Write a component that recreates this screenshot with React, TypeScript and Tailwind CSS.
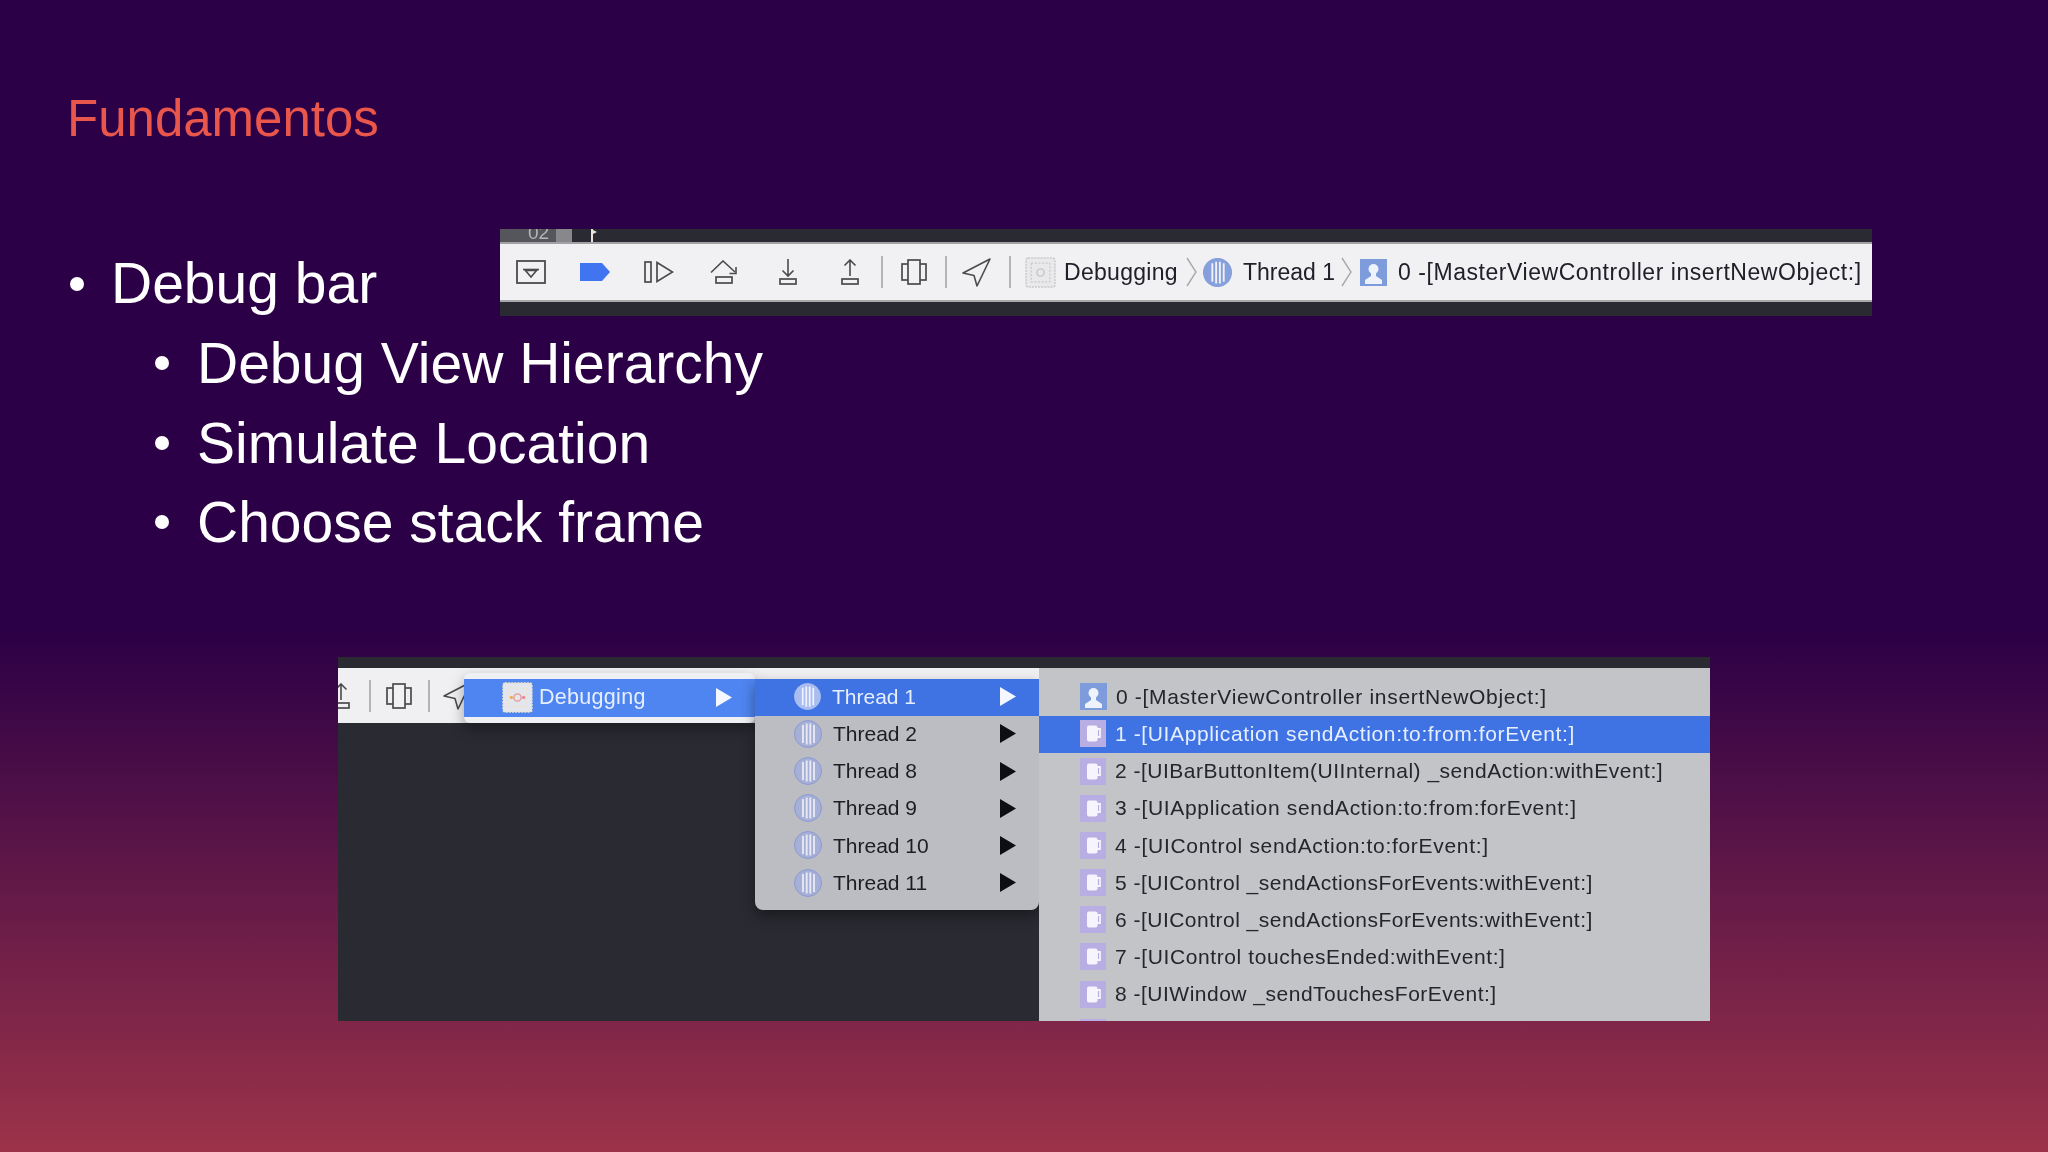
import React from "react";

const S = "#4b4b4e";

function BoxIcon() {
  return (
    <svg width="30" height="24" viewBox="0 0 30 24" className="shrink-0" fill="none">
      <rect x="1" y="1" width="28" height="22" stroke={S} strokeWidth="1.8" />
      <path d="M7 9.5H23" stroke={S} strokeWidth="1.6" />
      <path d="M9.5 10.5H20.5L15 17Z" stroke={S} strokeWidth="1.6" />
    </svg>
  );
}
function TagIcon() {
  return (
    <svg width="30" height="18" viewBox="0 0 30 18" className="shrink-0">
      <path d="M0 0H22L30 9L22 18H0Z" fill="#4174f0" />
    </svg>
  );
}
function ContinueIcon() {
  return (
    <svg width="30" height="22" viewBox="0 0 30 22" className="shrink-0" fill="none">
      <rect x="1" y="1" width="6" height="20" stroke={S} strokeWidth="1.7" />
      <path d="M13 1.5L28.5 11L13 20.5Z" stroke={S} strokeWidth="1.7" />
    </svg>
  );
}
function StepOverIcon() {
  return (
    <svg width="28" height="24" viewBox="0 0 28 24" className="shrink-0" fill="none">
      <path d="M1 12.5L13 1L25 12" stroke={S} strokeWidth="1.6" />
      <path d="M26 7V13.5H19.5" stroke={S} strokeWidth="1.6" />
      <rect x="6" y="17" width="16" height="6" stroke={S} strokeWidth="1.7" />
    </svg>
  );
}
function StepIntoIcon() {
  return (
    <svg width="18" height="26" viewBox="0 0 18 26" className="shrink-0" fill="none">
      <path d="M9 0V17M3.5 11.5L9 17L14.5 11.5" stroke={S} strokeWidth="1.6" />
      <rect x="1" y="20" width="16" height="5" stroke={S} strokeWidth="1.7" />
    </svg>
  );
}
function StepOutIcon() {
  return (
    <svg width="18" height="26" viewBox="0 0 18 26" className="shrink-0" fill="none">
      <path d="M9 17V1M3.5 6.5L9 1L14.5 6.5" stroke={S} strokeWidth="1.6" />
      <rect x="1" y="20" width="16" height="5" stroke={S} strokeWidth="1.7" />
    </svg>
  );
}
function ViewIcon() {
  return (
    <svg width="26" height="26" viewBox="0 0 26 26" className="shrink-0" fill="none">
      <rect x="1" y="5" width="24" height="16" stroke={S} strokeWidth="1.7" />
      <rect x="7" y="1" width="12" height="24" fill="#f1f1f3" stroke={S} strokeWidth="1.7" />
    </svg>
  );
}
function LocationIcon() {
  return (
    <svg width="29" height="29" viewBox="0 0 29 29" className="shrink-0" fill="none">
      <path d="M1 15L28 1L15 28L12 17.5Z" stroke={S} strokeWidth="1.6" strokeLinejoin="round" />
    </svg>
  );
}
function DebugGridIcon({ tint }: { tint?: boolean }) {
  const c = tint ? "#efe3c4" : "#c9c9cc";
  return (
    <svg width="31" height="31" viewBox="0 0 30 30" className="shrink-0" fill="none">
      <rect x="1" y="1" width="28" height="28" rx="2" fill={tint ? "#e3e6ee" : "#e9e9eb"} stroke={c} strokeWidth="1.4" strokeDasharray="2 1" />
      <rect x="6" y="6" width="18" height="18" stroke={c} strokeWidth="1.2" strokeDasharray="2 1.5" />
      <circle cx="15" cy="15" r="3.5" stroke={tint ? "#e89a8c" : "#c6c6c9"} strokeWidth="1.4" />
      {tint ? <circle cx="9" cy="15" r="1.6" fill="#e8b060" /> : null}
      {tint ? <circle cx="21" cy="15" r="1.6" fill="#e88aa0" /> : null}
    </svg>
  );
}
function ThreadIcon({ size, fill, bars, border }: { size: number; fill: string; bars: string; border?: string }) {
  return (
    <svg width={size} height={size} viewBox="0 0 28 28" className="shrink-0">
      <circle cx="14" cy="14" r="13.5" fill={fill} stroke={border ?? fill} strokeWidth="1" />
      <path d="M9 5V23M12.7 3.5V24.5M16.3 3.5V24.5M20 5V23" stroke={bars} strokeWidth="1.8" />
    </svg>
  );
}
function PersonIcon() {
  return (
    <svg width="27" height="27" viewBox="0 0 27 27" className="shrink-0">
      <rect width="27" height="27" fill="#7e9cdc" />
      <circle cx="13.5" cy="10" r="5" fill="#eef2fb" />
      <path d="M11 13H16V17L22 21V25H5V21L11 17Z" fill="#eef2fb" />
    </svg>
  );
}
function CupIcon() {
  return (
    <svg width="26" height="27" viewBox="0 0 26 27" className="shrink-0">
      <rect width="26" height="27" fill="#b8aee4" />
      <rect x="7" y="5.5" width="10.5" height="16" rx="2" fill="#f6f4fc" />
      <path d="M17 9H20V17H17Z" fill="none" stroke="#f6f4fc" strokeWidth="1.8" />
    </svg>
  );
}
function Chevron() {
  return (
    <svg width="11" height="30" viewBox="0 0 11 30" className="shrink-0" fill="none">
      <path d="M1 1L10 15L1 29" stroke="#a9a9ac" strokeWidth="1.4" />
    </svg>
  );
}
function Arrow({ color }: { color: string }) {
  return (
    <svg width="16" height="19" viewBox="0 0 16 19" className="shrink-0">
      <path d="M0 0L16 9.5L0 19Z" fill={color} />
    </svg>
  );
}
function Sep() {
  return <div className="h-[32px] w-[2px] shrink-0 bg-[#b4b4b6]" />;
}

const threads = ["Thread 1", "Thread 2", "Thread 8", "Thread 9", "Thread 10", "Thread 11"];
const frames = [
  { text: "0 -[MasterViewController insertNewObject:]", track: "tracking-[0.68px]" },
  { text: "1 -[UIApplication sendAction:to:from:forEvent:]", track: "tracking-[0.62px]" },
  { text: "2 -[UIBarButtonItem(UIInternal) _sendAction:withEvent:]", track: "tracking-[0.5px]" },
  { text: "3 -[UIApplication sendAction:to:from:forEvent:]", track: "tracking-[0.66px]" },
  { text: "4 -[UIControl sendAction:to:forEvent:]", track: "tracking-[0.68px]" },
  { text: "5 -[UIControl _sendActionsForEvents:withEvent:]", track: "tracking-[0.48px]" },
  { text: "6 -[UIControl _sendActionsForEvents:withEvent:]", track: "tracking-[0.48px]" },
  { text: "7 -[UIControl touchesEnded:withEvent:]", track: "tracking-[0.6px]" },
  { text: "8 -[UIWindow _sendTouchesForEvent:]", track: "tracking-[0.5px]" },
];

function DebugBar() {
  return (
    <div className="flex h-[87px] w-[1372px] shrink-0 -mt-[14px] flex-col bg-[#2a2b32] blur-[0.6px]">
      <div className="flex h-[13px] shrink-0 items-start overflow-hidden">
        <div className="flex h-[13px] w-[72px] overflow-hidden bg-[#55565b]">
          <span className="ml-[28px] -mt-[6px] text-[19px] leading-[20px] text-[#b4b4b8]">02</span>
          <div className="ml-auto h-[13px] w-[16px] bg-[#88888c]" />
        </div>
        <svg width="7" height="13" viewBox="0 0 7 13" className="ml-[18px] shrink-0">
          <path d="M1 0H3V13H1Z" fill="#e8e4dc" />
          <path d="M3 1L7 3L3 5Z" fill="#e8e4dc" />
        </svg>
      </div>
      <div className="flex h-[60px] shrink-0 items-center border-y-2 border-t-[#a2a2a5] border-b-[#a9a9ac] bg-[#f1f1f3] pl-[16px] text-[23px] text-[#20202a]">
        <BoxIcon />
        <div className="ml-[34px]"><TagIcon /></div>
        <div className="ml-[34px]"><ContinueIcon /></div>
        <div className="ml-[36px]"><StepOverIcon /></div>
        <div className="ml-[41px]"><StepIntoIcon /></div>
        <div className="ml-[44px]"><StepOutIcon /></div>
        <div className="ml-[22px]"><Sep /></div>
        <div className="ml-[18px]"><ViewIcon /></div>
        <div className="ml-[18px]"><Sep /></div>
        <div className="ml-[15px]"><LocationIcon /></div>
        <div className="ml-[18px]"><Sep /></div>
        <div className="ml-[14px]"><DebugGridIcon /></div>
        <span className="ml-[8px] w-[122px] shrink-0 tracking-[0.3px]">Debugging</span>
        <Chevron />
        <div className="ml-[6px]"><ThreadIcon size={29} fill="#86a0dc" bars="#f1f1f3" /></div>
        <span className="ml-[11px] w-[98px] shrink-0">Thread 1</span>
        <Chevron />
        <div className="ml-[8px]"><PersonIcon /></div>
        <span className="ml-[11px] whitespace-nowrap tracking-[0.55px]">{frames[0].text}</span>
      </div>
    </div>
  );
}

function MenuShot() {
  return (
    <div className="relative ml-[338px] mt-[95px] h-[364px] w-[1372px] overflow-hidden bg-[#2a2b32] blur-[0.6px]">
      <div className="h-[11px] bg-[#2a2b32]" />
      <div className="flex h-[55px] items-center bg-[#f0f0f2]">
        <div className="-ml-[6px]"><StepOutIcon /></div>
        <div className="ml-[19px]"><Sep /></div>
        <div className="ml-[15px]"><ViewIcon /></div>
        <div className="ml-[16px]"><Sep /></div>
        <div className="ml-[13px]"><LocationIcon /></div>
      </div>

      <div className="absolute left-[126px] top-[16px] flex h-[50px] w-[291px] items-center rounded-[6px] bg-[#eef0f4] shadow-[0_6px_14px_rgba(0,0,0,0.35)]">
        <div className="flex h-[38px] w-full items-center bg-[#4f85f0] pb-[2px] pl-[38px] pr-[23px] text-[21.5px] text-[#e6efff]">
          <DebugGridIcon tint />
          <span className="ml-[6px] tracking-[0.3px]">Debugging</span>
          <div className="ml-auto"><Arrow color="#f4f7ff" /></div>
        </div>
      </div>

      <div className="absolute left-[417px] top-[22px] h-[231px] w-[284px] rounded-b-[8px] bg-[#bcbdc2] shadow-[0_6px_14px_rgba(0,0,0,0.4)]">
        {threads.map((t, i) => (
          <div
            key={t}
            className={`flex h-[37.2px] items-center pb-[2px] pl-[39px] pr-[23px] text-[21px] ${i === 0 ? "bg-[#3f72e2] text-[#e6efff]" : "text-[#1c1c22]"}`}
          >
            {i === 0 ? (
              <ThreadIcon size={27} fill="#a9bdf0" bars="#eef2fc" />
            ) : (
              <ThreadIcon size={28} fill="#a6afd6" bars="#e9ebf4" border="#8c9ad2" />
            )}
            <span className="ml-[11px]">{t}</span>
            <div className="ml-auto"><Arrow color={i === 0 ? "#f4f7ff" : "#0e0e12"} /></div>
          </div>
        ))}
      </div>

      <div className="absolute bottom-0 left-[701px] right-0 top-[11px] overflow-hidden bg-[#c2c4c8] pt-[11px]">
        {frames.map((f, i) => (
          <div
            key={f.text}
            className={`flex h-[37.2px] items-center pb-[2px] pl-[41px] text-[21px] whitespace-nowrap ${i === 1 ? "bg-[#3f72e2] text-[#e6efff]" : "text-[#25252b]"} ${f.track}`}
          >
            {i === 0 ? <PersonIcon /> : <CupIcon />}
            <span className="ml-[9px]">{f.text}</span>
          </div>
        ))}
        <div className="flex h-[37.2px] items-center pl-[41px]"><CupIcon /></div>
      </div>
    </div>
  );
}

function SubItem({ children }: { children: React.ReactNode }) {
  return (
    <div className="flex h-[79.7px] items-start pl-[155px] text-[57px] leading-[80px]">
      <span className="mt-[33px] h-[14px] w-[14px] shrink-0 rounded-full bg-white" />
      <span className="ml-[28px] whitespace-nowrap">{children}</span>
    </div>
  );
}

export default function App() {
  return (
    <div className="h-[1152px] w-[2048px] overflow-hidden bg-[linear-gradient(180deg,#2c0046_0%,#2c0046_55%,#9c3349_100%)] [font-family:'Liberation_Sans',Arial,sans-serif]">
      <h1 className="pl-[67px] pt-[89px] text-[51px] leading-[60px] font-normal text-[#e9564c]">Fundamentos</h1>
      <div className="mt-[94px] text-white">
        <div className="flex h-[80px] items-start pl-[70px] text-[57px] leading-[80px]">
          <span className="mt-[34px] h-[14px] w-[14px] shrink-0 rounded-full bg-white" />
          <span className="ml-[27px] w-[389px] shrink-0 whitespace-nowrap">Debug bar</span>
          <DebugBar />
        </div>
        <SubItem>Debug View Hierarchy</SubItem>
        <SubItem>Simulate Location</SubItem>
        <SubItem>Choose stack frame</SubItem>
      </div>
      <MenuShot />
    </div>
  );
}
